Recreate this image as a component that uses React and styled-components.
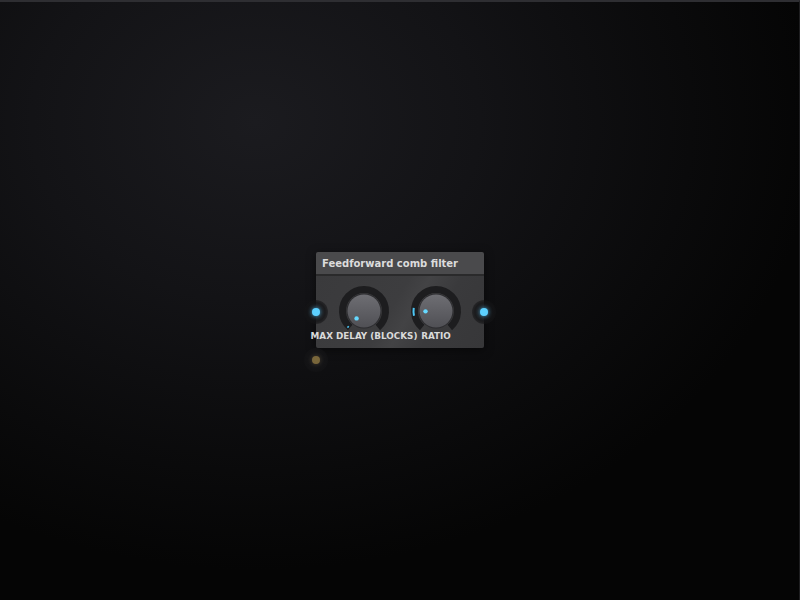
import styled, {createGlobalStyle} from 'styled-components'

const GlobalStyle = createGlobalStyle`
  html, body {
    margin: 0;
    padding: 0;
    width: 100%;
    height: 100%;
    overflow: hidden;
    background: #060607;
  }
  #root {
    width: 100%;
    height: 100%;
  }
`

// knob value markers, angle in degrees (0 = up, clockwise)
const knobs = [
  {label: 'MAX DELAY (BLOCKS)', angle: 225, arc: 4},
  {label: 'RATIO', angle: 268, arc: 20},
]

const polar = (cx, cy, r, deg) => {
  const a = (deg - 90) * Math.PI / 180
  return [cx + r * Math.cos(a), cy + r * Math.sin(a)]
}

const arcPath = (cx, cy, r, from, to) => {
  const [x1, y1] = polar(cx, cy, r, from)
  const [x2, y2] = polar(cx, cy, r, to)
  const large = to - from > 180 ? 1 : 0
  return `M ${x1} ${y1} A ${r} ${r} 0 ${large} 1 ${x2} ${y2}`
}

const Knob = ({angle, arc}) => {
  const [dx, dy] = polar(26, 26, 10.5, angle)
  return (
    <KnobSvg width="52" height="52" viewBox="0 0 52 52">
      <defs>
        <linearGradient id="face" x1="0" y1="0" x2="0" y2="1">
          <stop offset="0" stopColor="#6e6e73" />
          <stop offset="1" stopColor="#505055" />
        </linearGradient>
      </defs>
      <path d={arcPath(26, 26, 21.5, 220, 500)} fill="none" stroke="#1d1d1f" strokeWidth="7" />
      <path d={arcPath(26, 26, 22.5, angle - arc / 2, angle + arc / 2)} fill="none" stroke="#4cc6f5" strokeWidth="2" />
      <circle cx="26" cy="26" r="17.5" fill="#2c2c2f" />
      <circle cx="26" cy="26" r="16.5" fill="url(#face)" />
      <circle cx={dx} cy={dy} r="2.2" fill="#66d8ff" />
    </KnobSvg>
  )
}

const App = () => {
  return (
    <Canvas>
      <GlobalStyle />
      <Node>
        <Header>Feedforward comb filter</Header>
        <Body>
          {knobs.map((k) => (
            <KnobCol key={k.label}>
              <Knob angle={k.angle} arc={k.arc} />
              <KnobLabel>{k.label}</KnobLabel>
            </KnobCol>
          ))}
        </Body>
        <Port $x={0} $y={60} />
        <Port $x={168} $y={60} />
        <Port $x={0} $y={108} $color="#8a7440" $dim />
      </Node>
    </Canvas>
  )
}

const Canvas = styled.div`
  position: relative;
  width: 100%;
  height: 100%;
  box-sizing: border-box;
  border-top: 2px solid #2e2e32;
  border-right: 1px solid #1e1e20;
  background: radial-gradient(ellipse 70% 75% at 32% 20%, #1b1b1f 0%, #131316 40%, #0a0a0b 78%, #050505 100%);
  font-family: "DejaVu Sans", "Liberation Sans", sans-serif;
`
const Node = styled.div`
  position: absolute;
  left: 316px;
  top: 250px;
  width: 168px;
  height: 96px;
  border-radius: 2px;
  display: flex;
  flex-direction: column;
  box-shadow: 0 2px 10px rgba(0, 0, 0, 0.5);
`
const Header = styled.div`
  height: 22px;
  line-height: 24px;
  padding: 0 6px;
  background: #4a4a4c;
  border-radius: 2px 2px 0 0;
  border-bottom: 2px solid #2a2a2b;
  color: #dcdcdc;
  font-size: 10px;
  font-weight: bold;
  white-space: nowrap;
`
const Body = styled.div`
  flex: 1;
  display: flex;
  padding: 0 12px;
  background: linear-gradient(120deg, #3a3a3c 0%, #3d3d3f 45%, #434345 55%, #3a3a3c 70%, #373739 100%);
  border-radius: 0 0 2px 2px;
`
const KnobCol = styled.div`
  width: 72px;
  display: flex;
  flex-direction: column;
  align-items: center;
  padding-top: 9px;
`
const KnobSvg = styled.svg`
  display: block;
`
const KnobLabel = styled.div`
  margin-top: -6px;
  color: #dadada;
  font-size: 8.8px;
  font-weight: bold;
  white-space: nowrap;
`
const Port = styled.div`
  position: absolute;
  left: ${(p) => p.$x - 12}px;
  top: ${(p) => p.$y - 12}px;
  width: 24px;
  height: 24px;
  border-radius: 50%;
  background: radial-gradient(circle, rgba(32, 32, 36, 0.9) 0%, rgba(20, 20, 22, 0.8) 55%, rgba(0, 0, 0, 0) 100%);
  &::after {
    content: '';
    position: absolute;
    left: 8px;
    top: 8px;
    width: 8px;
    height: 8px;
    border-radius: 50%;
    background: ${(p) => p.$color || '#5cd0ff'};
    box-shadow: 0 0 4px ${(p) => p.$dim ? 'rgba(140, 116, 64, 0.4)' : 'rgba(80, 200, 255, 0.8)'};
    opacity: ${(p) => p.$dim ? 0.85 : 1};
  }
`

export default App
